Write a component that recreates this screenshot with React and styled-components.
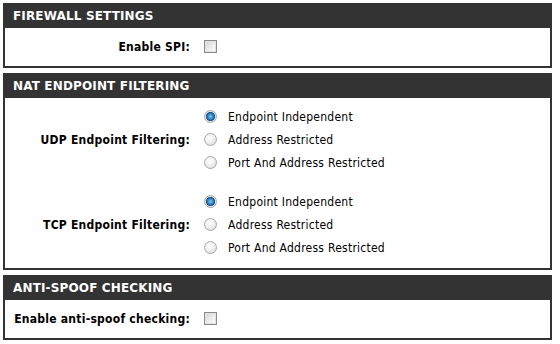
import React from 'react';
import styled, { createGlobalStyle } from 'styled-components';

const GlobalStyle = createGlobalStyle`
  body {
    margin: 0;
    background: #ffffff;
    font-family: "DejaVu Sans Condensed", "DejaVu Sans", sans-serif;
  }
`;

const Page = styled.div`
  width: 549px;
  padding: 3px;
  display: flex;
  flex-direction: column;
  gap: 5px;
`;

const Box = styled.div`
  border: 2px solid #333333;
  background: #ffffff;
`;

const Header = styled.div`
  height: 23px;
  margin: -2px -2px 0;
  padding: 2px 10px 0;
  background: #333333;
  color: #ffffff;
  font-family: "DejaVu Sans", Verdana, sans-serif;
  font-weight: bold;
  font-size: 12px;
  line-height: 23px;
  letter-spacing: 0.15px;
`;

const Body = styled.div`
  padding: ${({ $pad }) => $pad || '7px 0 8px'};
  display: flex;
  flex-direction: column;
  gap: 16px;
`;

const Field = styled.div`
  display: grid;
  grid-template-columns: 185px 1fr;
  column-gap: 14px;
  align-items: center;
`;

const Label = styled.div`
  text-align: right;
  font-weight: bold;
  font-size: 12px;
  letter-spacing: 0.25px;
  color: #000000;
`;

const Options = styled.div`
  display: flex;
  flex-direction: column;
`;

const Option = styled.label`
  height: 23px;
  display: flex;
  align-items: center;
  gap: 11px;
  font-size: 12px;
  letter-spacing: 0.25px;
  color: #000000;
`;

const Check = styled.span`
  display: block;
  width: 11px;
  height: 11px;
  border: 1px solid #8a8a8a;
  box-shadow: inset 0 0 0 1px #e4e4e4;
  background: linear-gradient(135deg, #d2d2d2 0%, #efefef 60%, #fbfbfb 100%);
`;

const CheckCell = styled.div`
  height: 23px;
  display: flex;
  align-items: center;
`;

const Radio = styled.span`
  display: block;
  width: 11px;
  height: 11px;
  border-radius: 50%;
  border: 1px solid #a8a8a8;
  background: ${({ $on }) =>
    $on
      ? 'radial-gradient(circle at 50% 50%, #7fc6ef 0%, #1f6fb2 45%, #1a4f86 55%, #e8e8e8 62%, #dedede 100%)'
      : 'radial-gradient(circle at 40% 35%, #ffffff 0%, #eeeeee 50%, #d4d4d4 100%)'};
`;

const FILTERS = ['Endpoint Independent', 'Address Restricted', 'Port And Address Restricted'];

function RadioGroup({ label }) {
  return (
    <Field>
      <Label>{label}</Label>
      <Options>
        {FILTERS.map((f, i) => (
          <Option key={f}>
            <Radio $on={i === 0} />
            {f}
          </Option>
        ))}
      </Options>
    </Field>
  );
}

function CheckField({ label }) {
  return (
    <Field>
      <Label>{label}</Label>
      <CheckCell>
        <Check />
      </CheckCell>
    </Field>
  );
}

export default function App() {
  return (
    <>
      <GlobalStyle />
      <Page>
        <Box>
          <Header>FIREWALL SETTINGS</Header>
          <Body>
            <CheckField label="Enable SPI:" />
          </Body>
        </Box>
        <Box>
          <Header>NAT ENDPOINT FILTERING</Header>
          <Body $pad="7px 0 9px">
            <RadioGroup label="UDP Endpoint Filtering:" />
            <RadioGroup label="TCP Endpoint Filtering:" />
          </Body>
        </Box>
        <Box>
          <Header>ANTI-SPOOF CHECKING</Header>
          <Body>
            <CheckField label="Enable anti-spoof checking:" />
          </Body>
        </Box>
      </Page>
    </>
  );
}
